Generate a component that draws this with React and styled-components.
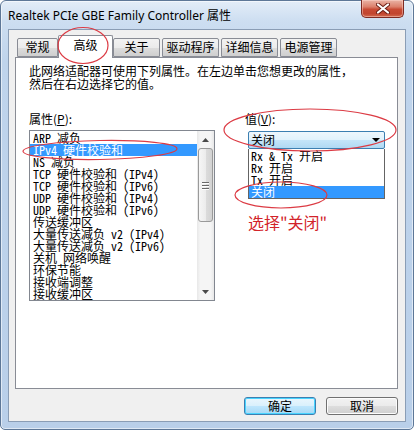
import React from "react"
import styled, { createGlobalStyle } from "styled-components"

const GlobalStyle = createGlobalStyle`
  html, body {
    margin: 0;
    padding: 0;
    background: #ffffff;
  }
  body {
    width: 414px;
    height: 430px;
    overflow: hidden;
  }
`

const CJK = `"Noto Sans CJK SC", "Noto Sans", sans-serif`
const MONO = `"Noto Sans Mono CJK SC", "Noto Sans CJK SC", monospace`

const Window = styled.div`
  position: relative;
  width: 414px;
  height: 430px;
  box-sizing: border-box;
  border: 1px solid #5d7797;
  border-radius: 6px 6px 5px 5px;
  background: linear-gradient(180deg, #e3edf8 0px, #cddef1 20px, #bfd4ec 60px, #b9cfe9 100%);
  box-shadow: inset 0 0 0 1px rgba(255, 255, 255, 0.55);
  display: flex;
  flex-direction: column;
  font-family: ${CJK};
  color: #000;
`

const TitleBar = styled.div`
  display: flex;
  align-items: flex-start;
  height: 28px;
  padding: 0 9px 0 7px;
  flex-shrink: 0;
`

const TitleText = styled.div`
  margin-top: 8px;
  font-family: "Noto Sans", ${CJK};
  font-size: 12px;
  line-height: 14px;
  white-space: nowrap;
`

const CloseButton = styled.div`
  margin-left: auto;
  margin-top: -1px;
  width: 43px;
  height: 18px;
  box-sizing: border-box;
  border: 1px solid #7e2a22;
  border-top: none;
  border-radius: 0 0 5px 5px;
  background: linear-gradient(180deg, #eab3a6 0%, #dc806c 40%, #c84a34 55%, #c2452f 80%, #d26a4f 100%);
  box-shadow: inset 0 0 0 1px rgba(255, 220, 210, 0.45);
  display: flex;
  align-items: center;
  justify-content: center;
`

const Client = styled.div`
  flex: 1;
  margin: 0 7px 7px 7px;
  border: 1px solid #8a9db5;
  background: #f0f0f0;
  padding: 5px 7px 0 6px;
  display: flex;
  flex-direction: column;
`

const TabStrip = styled.div`
  display: flex;
  align-items: flex-end;
  height: 22px;
  padding-left: 2px;
  gap: 2px;
`

const Tab = styled.div`
  position: relative;
  box-sizing: border-box;
  width: ${(p) => (p.$active ? p.$w + 4 : p.$w)}px;
  height: ${(p) => (p.$active ? 23 : 19)}px;
  margin: ${(p) => (p.$active ? "0 -2px -1px -2px" : "0")};
  z-index: ${(p) => (p.$active ? 2 : 1)};
  border: 1px solid #898c95;
  border-bottom: ${(p) => (p.$active ? "none" : "1px solid #898c95")};
  border-radius: 2px 2px 0 0;
  background: ${(p) =>
    p.$active ? "#ffffff" : "linear-gradient(180deg, #f2f2f2 0%, #ebebeb 50%, #dddddd 51%, #cfcfcf 100%)"};
  font-size: 12px;
  line-height: ${(p) => (p.$active ? 17 : 16)}px;
  text-align: center;
  white-space: nowrap;
`

const Panel = styled.div`
  position: relative;
  z-index: 1;
  box-sizing: border-box;
  height: 332px;
  border: 1px solid #898c95;
  background: #ffffff;
  padding: 6px 12px 0 13px;
`

const Desc = styled.div`
  font-size: 12px;
  line-height: 13px;
  white-space: nowrap;
`

const Columns = styled.div`
  display: flex;
  margin-top: 22px;
`

const LeftCol = styled.div`
  width: 186px;
  display: flex;
  flex-direction: column;
`

const RightCol = styled.div`
  margin-left: 30px;
  width: 140px;
  display: flex;
  flex-direction: column;
`

const Label = styled.div`
  font-size: 12px;
  line-height: 13px;
  white-space: nowrap;
  u {
    text-decoration: underline;
  }
`

const ListBox = styled.div`
  margin-top: 5px;
  box-sizing: border-box;
  height: 171px;
  border: 1px solid #828790;
  display: flex;
  overflow: hidden;
`

const ListItems = styled.div`
  flex: 1;
  padding-top: 1px;
`

const Item = styled.div`
  height: 12px;
  line-height: 12px;
  font-family: ${MONO};
  font-size: 12px;
  padding-left: 3px;
  white-space: nowrap;
  background: ${(p) => (p.$selected ? "#3399ff" : "transparent")};
  color: ${(p) => (p.$selected ? "#ffffff" : "#000000")};
`

const ScrollBar = styled.div`
  width: 17px;
  display: flex;
  flex-direction: column;
  background: linear-gradient(90deg, #e8e8e8 0%, #f5f5f5 20%, #f5f5f5 80%, #e8e8e8 100%);
`

const ScrollArrow = styled.div`
  height: 17px;
  display: flex;
  align-items: center;
  justify-content: center;
`

const Thumb = styled.div`
  margin: 0 1px;
  height: 74px;
  box-sizing: border-box;
  border: 1px solid #9a9a9a;
  border-radius: 3px;
  background: linear-gradient(90deg, #f6f6f6 0%, #ececec 50%, #dcdcdc 51%, #d2d2d2 100%);
  display: flex;
  flex-direction: column;
  align-items: center;
  justify-content: center;
  gap: 2px;
`

const Grip = styled.div`
  width: 7px;
  height: 1px;
  background: #6a6a6a;
  box-shadow: 0 1px 0 #ffffff;
`

const Track = styled.div`
  flex: 1;
`

const Combo = styled.div`
  margin: 6px 0 0 3px;
  width: 137px;
  height: 18px;
  box-sizing: border-box;
  border: 1px solid #3c7fb1;
  border-radius: 2px;
  background: linear-gradient(180deg, #eef7fd 0%, #e0f2fc 50%, #c4e5f9 51%, #b0d9f3 100%);
  display: flex;
  align-items: center;
  padding: 0 3px 0 2px;
  font-size: 12px;
  line-height: 16px;
`

const ComboArrow = styled.div`
  margin-left: auto;
  margin-right: 1px;
  width: 0;
  height: 0;
  border-left: 4px solid transparent;
  border-right: 4px solid transparent;
  border-top: 4px solid #000;
`

const DropList = styled.div`
  margin-left: 3px;
  width: 137px;
  box-sizing: border-box;
  border: 1px solid #646464;
  border-top: none;
  padding: 1px 0 0 0;
`

const DropItem = styled.div`
  height: 12px;
  line-height: 12px;
  font-family: ${MONO};
  font-size: 12px;
  padding-left: 2px;
  white-space: nowrap;
  background: ${(p) => (p.$selected ? "#3399ff" : "transparent")};
  color: ${(p) => (p.$selected ? "#ffffff" : "#000000")};
`

const Note = styled.div`
  margin: 14px 0 0 3px;
  font-size: 16px;
  line-height: 18px;
  color: #d2232a;
  white-space: nowrap;
`

const ButtonRow = styled.div`
  display: flex;
  justify-content: flex-end;
  gap: 10px;
  margin-top: 8px;
`

const Button = styled.div`
  width: 72px;
  height: 18px;
  box-sizing: border-box;
  border: 1px solid ${(p) => (p.$default ? "#3c7fb1" : "#707070")};
  border-radius: 3px;
  background: ${(p) =>
    p.$default
      ? "linear-gradient(180deg, #eaf6fd 0%, #d9f0fc 50%, #bee6fd 51%, #a7d9f5 100%)"
      : "linear-gradient(180deg, #f2f2f2 0%, #ebebeb 50%, #dddddd 51%, #cfcfcf 100%)"};
  box-shadow: ${(p) => (p.$default ? "inset 0 0 0 1px #48d4ff" : "inset 0 0 0 1px #fcfcfc")};
  font-size: 12px;
  line-height: 16px;
  text-align: center;
`

const Annotations = styled.svg`
  position: absolute;
  left: -1px;
  top: -1px;
  z-index: 10;
  pointer-events: none;
`

const tabs = [
  { label: "常规", w: 41 },
  { label: "高级", w: 51, active: true },
  { label: "关于", w: 47 },
  { label: "驱动程序", w: 57 },
  { label: "详细信息", w: 57 },
  { label: "电源管理", w: 57 },
]

const props = [
  "ARP 减负",
  "IPv4 硬件校验和",
  "NS 减负",
  "TCP 硬件校验和 (IPv4)",
  "TCP 硬件校验和 (IPv6)",
  "UDP 硬件校验和 (IPv4)",
  "UDP 硬件校验和 (IPv6)",
  "传送缓冲区",
  "大量传送减负 v2 (IPv4)",
  "大量传送减负 v2 (IPv6)",
  "关机 网络唤醒",
  "环保节能",
  "接收端调整",
  "接收缓冲区",
]

const values = ["Rx & Tx 开启", "Rx 开启", "Tx 开启", "关闭"]

const CloseIcon = () => (
  <svg width="14" height="11" viewBox="0 0 14 11">
    <path d="M2 1.5 L12 9.5 M12 1.5 L2 9.5" stroke="#6b1d14" strokeWidth="4" strokeLinecap="round" />
    <path d="M2 1.5 L12 9.5 M12 1.5 L2 9.5" stroke="#ffffff" strokeWidth="2.2" strokeLinecap="round" />
  </svg>
)

const ArrowUp = () => (
  <svg width="7" height="4" viewBox="0 0 7 4">
    <path d="M0 4 L3.5 0 L7 4 Z" fill="#4a4a4a" />
  </svg>
)

const ArrowDown = () => (
  <svg width="7" height="4" viewBox="0 0 7 4">
    <path d="M0 0 L7 0 L3.5 4 Z" fill="#4a4a4a" />
  </svg>
)

export default function App() {
  return (
    <>
      <GlobalStyle />
      <Window>
        <TitleBar>
          <TitleText>Realtek PCIe GBE Family Controller 属性</TitleText>
          <CloseButton>
            <CloseIcon />
          </CloseButton>
        </TitleBar>
        <Client>
          <TabStrip>
            {tabs.map((t) => (
              <Tab key={t.label} $w={t.w} $active={t.active}>
                {t.label}
              </Tab>
            ))}
          </TabStrip>
          <Panel>
            <Desc>
              此网络适配器可使用下列属性。在左边单击您想更改的属性，
              <br />
              然后在右边选择它的值。
            </Desc>
            <Columns>
              <LeftCol>
                <Label>
                  属性(<u>P</u>):
                </Label>
                <ListBox>
                  <ListItems>
                    {props.map((p, i) => (
                      <Item key={p} $selected={i === 1}>
                        {p}
                      </Item>
                    ))}
                  </ListItems>
                  <ScrollBar>
                    <ScrollArrow>
                      <ArrowUp />
                    </ScrollArrow>
                    <Thumb>
                      <Grip />
                      <Grip />
                      <Grip />
                    </Thumb>
                    <Track />
                    <ScrollArrow>
                      <ArrowDown />
                    </ScrollArrow>
                  </ScrollBar>
                </ListBox>
              </LeftCol>
              <RightCol>
                <Label>
                  值(<u>V</u>):
                </Label>
                <Combo>
                  关闭
                  <ComboArrow />
                </Combo>
                <DropList>
                  {values.map((v, i) => (
                    <DropItem key={v} $selected={i === 3}>
                      {v}
                    </DropItem>
                  ))}
                </DropList>
                <Note>选择"关闭"</Note>
              </RightCol>
            </Columns>
          </Panel>
          <ButtonRow>
            <Button $default>确定</Button>
            <Button>取消</Button>
          </ButtonRow>
        </Client>
        <Annotations width="414" height="430" viewBox="0 0 414 430">
          <g fill="none" stroke="#dc3b44" strokeWidth="1.2">
            <ellipse cx="83" cy="45.5" rx="25" ry="18" />
            <ellipse cx="100" cy="150" rx="77" ry="9.5" transform="rotate(-1 100 150)" />
            <ellipse cx="310" cy="130" rx="86" ry="21" />
            <ellipse cx="281" cy="195" rx="46" ry="13" />
          </g>
        </Annotations>
      </Window>
    </>
  )
}
